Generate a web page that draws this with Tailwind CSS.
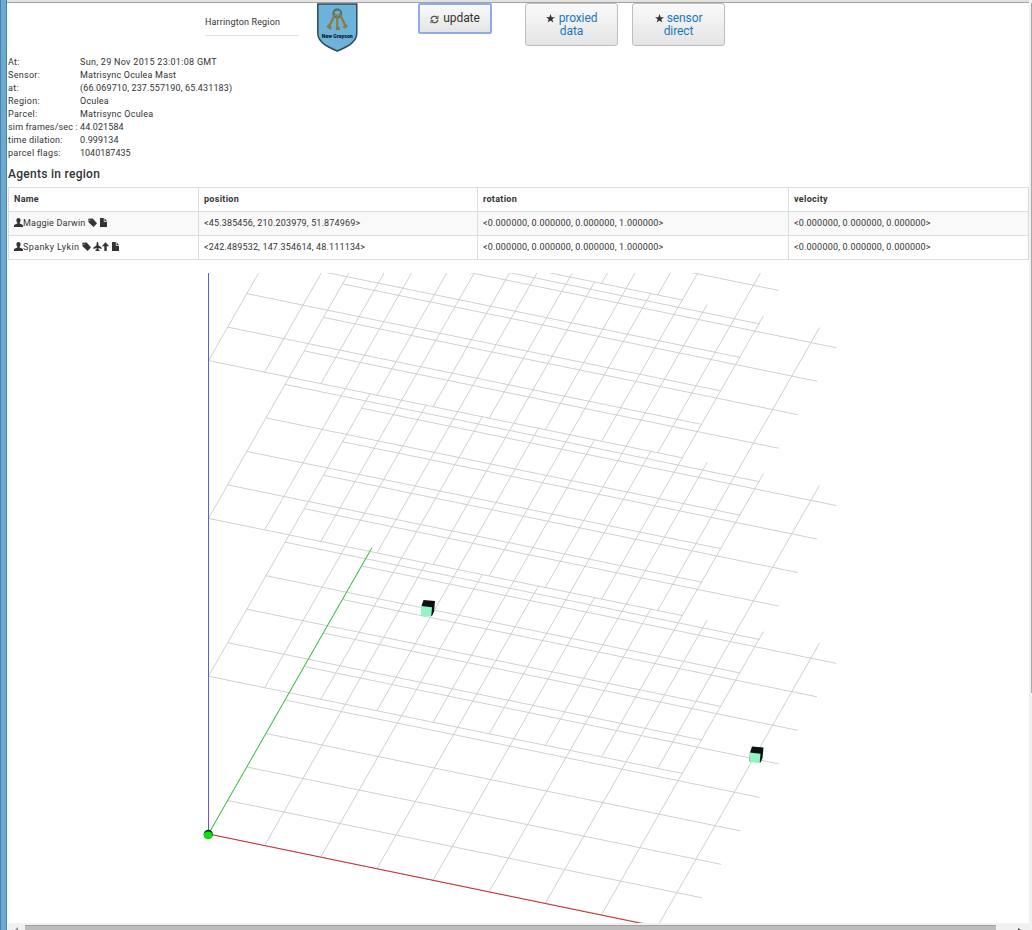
<!DOCTYPE html>
<html lang="en">
<head>
<meta charset="utf-8">
<title>Agents in region</title>
<script src="https://cdn.jsdelivr.net/npm/@tailwindcss/browser@4"></script>
</head>
<body class="h-[930px] w-[1032px] overflow-hidden bg-white font-['Roboto',sans-serif] text-[#333]">
<svg class="hidden">
  <symbol id="user" viewBox="0 0 9 9"><path d="M4.5 0C5.9 0 6.7 1 6.600 2.400 6.500 3.600 6 4.300 5.600 4.700v.8c.6.5 3.300.8 3.400 2V9H0V7.500c.1-1.200 2.800-1.500 3.400-2v-.8C3 4.300 2.500 3.600 2.400 2.400 2.300 1 3.100 0 4.500 0z"/></symbol>
  <symbol id="tag" viewBox="0 0 9 9"><path d="M.3.8 4.600.6 9 5.200 5.600 8.900.5 4.300z"/><circle cx="1.900" cy="2.200" r=".5" fill="#fff"/></symbol>
  <symbol id="file" viewBox="0 0 9 9"><path d="M1 0h3.800v3.800H8V9H1z"/><path d="M5.500.2 7.900 3H5.500z"/></symbol>
  <symbol id="plane" viewBox="0 0 9 9"><path d="M4.500 0c.6 0 .9.700.9 1.500v1.700L8.600 5.600v1.300L5.400 6v1.300l1.200 1V9H2.400v-.7l1.200-1V6L.4 6.900V5.600l3.200-2.400V1.500C3.600.7 3.900 0 4.500 0z"/></symbol>
  <symbol id="up" viewBox="0 0 9 9"><path d="M4.500.3 8.200 4.200H5.700V9H3.300V4.200H.8z"/></symbol>
</svg>
<div class="flex h-full flex-col">
  <div class="ml-1 h-[3px] shrink-0 border-b border-[#a3a3a3] bg-[#e2e2e2]"></div>
  <div class="-mt-[3px] flex min-h-0 flex-1">
    <div class="w-[7px] shrink-0 border-x border-x-[#4a80aa] bg-[#6aa9d0]"></div>
    <main class="flex w-[1022px] shrink-0 flex-col pl-px pt-[3px]">
      <header class="flex h-[53px] shrink-0 items-start pl-[197px]">
        <div class="h-[33px] w-[94px] border-b border-[#e2e2e2] pt-[11px] text-[9px] leading-4 tracking-[.15px]">Harrington Region</div>
        <svg class="ml-[18px] h-[50px] w-[42px]" viewBox="0.700 0.500 42 50">
          <path d="M1.500 1.500h39v29c0 8-7 13-19.500 18C8.500 43.500 1.500 38.500 1.500 30.500z" fill="#6db3d9" stroke="#31485a" stroke-width="1.500"/>
          <g fill="none" stroke="#8d7a42" stroke-width="2.200"><circle cx="21" cy="11" r="4" stroke="#4f6b69" stroke-width="1.800"/><path d="M19 11l-6.500 14M21 12v15M23 11l6.500 13"/><path d="M11 23l4 3M19.500 26h4M27 25l4-2" stroke-width="3"/></g>
          <text x="21" y="35.500" text-anchor="middle" textLength="31" lengthAdjust="spacingAndGlyphs" font-size="5.500" font-weight="900" fill="#0b1b29">New Grayson</text>
        </svg>
        <button class="ml-[59px] flex h-[31px] w-[74px] items-center justify-center gap-1 rounded-[2px] border-2 border-[#8faaea] bg-linear-to-b from-[#fafafa] to-[#e4e4e4] pb-0.5 text-xs tracking-[-.05px]">
          <svg class="mt-[3px] size-[9px]" viewBox="0 0 9 9" fill="none" stroke="#555" stroke-width="1.300"><path d="M1.200 4.200C1.200 1.200 5.500.5 7.200 2.500M7.800 4.800C7.800 7.800 3.500 8.500 1.800 6.500"/><path d="M8 .8v2.700H5.500M1 8.200V5.500h2.500" stroke-width="1"/></svg>update
        </button>
        <button class="ml-[33px] h-[43px] w-[93px] rounded-[3px] border border-[#bdbdbd] bg-linear-to-b from-[#fafafa] to-[#e4e4e4] text-xs leading-[13px] tracking-[-.1px] text-[#1a78bd]"><svg class="mr-1 inline size-[9px] align-[-1px]" viewBox="0 0 10 10" fill="#333"><path d="M5 0l1.300 3.500H10L7 5.800 8.100 9.500 5 7.300 1.900 9.500 3 5.800 0 3.500h3.700z"/></svg>proxied<br>data</button>
        <button class="ml-[14px] h-[43px] w-[93px] rounded-[3px] border border-[#bdbdbd] bg-linear-to-b from-[#fafafa] to-[#e4e4e4] text-xs leading-[13px] tracking-[-.1px] text-[#1a78bd]"><svg class="mr-[3px] inline size-[9px] align-[-1px]" viewBox="0 0 10 10" fill="#333"><path d="M5 0l1.300 3.500H10L7 5.800 8.100 9.500 5 7.300 1.900 9.500 3 5.800 0 3.500h3.700z"/></svg>sensor<br>direct</button>
      </header>
      <dl class="grid grid-cols-[72px_1fr] whitespace-nowrap text-[9px] leading-[13px] tracking-[.3px]">
        <dt>At:</dt><dd>Sun, 29 Nov 2015 23:01:08 GMT</dd>
        <dt>Sensor:</dt><dd class="tracking-[.2px]">Matrisync Oculea Mast</dd>
        <dt>at:</dt><dd class="tracking-[.13px]">(66.069710, 237.557190, 65.431183)</dd>
        <dt>Region:</dt><dd class="tracking-[.2px]">Oculea</dd>
        <dt>Parcel:</dt><dd class="tracking-[.25px]">Matrisync Oculea</dd>
        <dt class="tracking-[.15px]">sim frames/sec :</dt><dd class="tracking-[.1px]">44.021584</dd>
        <dt class="tracking-[.2px]">time dilation:</dt><dd class="tracking-[.1px]">0.999134</dd>
        <dt>parcel flags:</dt><dd class="tracking-normal">1040187435</dd>
      </dl>
      <h2 class="mt-[7px] h-[21px] text-xs font-medium leading-[15px] tracking-[.28px]">Agents in region</h2>
      <table class="w-[1021px] table-fixed border-collapse text-left text-[9px] leading-3 tracking-[.2px] [&_td]:border [&_td]:border-[#ddd] [&_td]:px-[5px] [&_td]:pt-0 [&_td]:pb-0.5 [&_th]:border [&_th]:border-[#ddd] [&_th]:px-[5px] [&_th]:pt-0 [&_th]:pb-0.5 [&_th]:tracking-[.3px] [&_tr]:h-6">
        <colgroup><col class="w-[190px]"><col class="w-[279px]"><col class="w-[311px]"><col></colgroup>
        <tr class="font-bold"><th>Name</th><th>position</th><th>rotation</th><th>velocity</th></tr>
        <tr class="bg-[#f9f9f9]"><td><div class="flex items-center"><svg class="size-[9px] fill-[#333]"><use href="#user"/></svg>Maggie Darwin<svg class="ml-[2px] size-[9px] fill-[#333]"><use href="#tag"/></svg><svg class="ml-[2px] size-[9px] fill-[#333]"><use href="#file"/></svg></div></td><td class="tracking-[.16px]">&lt;45.385456, 210.203979, 51.874969&gt;</td><td>&lt;0.000000, 0.000000, 0.000000, 1.000000&gt;</td><td>&lt;0.000000, 0.000000, 0.000000&gt;</td></tr>
        <tr><td><div class="flex items-center"><svg class="size-[9px] fill-[#333]"><use href="#user"/></svg><span class="tracking-[.4px]">Spanky Lykin</span><svg class="ml-[3px] size-[9px] fill-[#333]"><use href="#tag"/></svg><svg class="ml-[2px] size-[9px] fill-[#333]"><use href="#plane"/></svg><svg class="-ml-px size-[9px] fill-[#333]"><use href="#up"/></svg><svg class="ml-px size-[9px] fill-[#333]"><use href="#file"/></svg></div></td><td class="tracking-[.15px]">&lt;242.489532, 147.354614, 48.111134&gt;</td><td>&lt;0.000000, 0.000000, 0.000000, 1.000000&gt;</td><td>&lt;0.000000, 0.000000, 0.000000&gt;</td></tr>
      </table>
      <svg class="mt-[13px] h-[650px] w-[1021px] shrink-0" viewBox="8 273 1021 650">
        <path id="grid" fill="none" stroke="#cbcbcb" stroke-width=".9"/>
        <path d="M208.500 273V834" stroke="#5b5be0"/>
        <path d="M208.500 834L371.900 547.700" stroke="#2fc832"/>
        <path d="M208.500 834L688 933" stroke="#cf2a2a"/>
        <circle cx="208.300" cy="834.300" r="4.600" fill="#063b06"/><ellipse cx="208.100" cy="835.300" rx="4.300" ry="3.700" fill="#0be00b"/>
        <g id="agent"><path d="M423.500 600l11.500 1-1 10.500-2 4.500-11-1 .5-9z" fill="#0b1211"/><path d="M421 606l11 1.200-.8 9.400-10.200-.8z" fill="#93f5c4"/></g>
        <use href="#agent" x="328.500" y="146.500"/>
      </svg>
      <div class="flex h-[7px] shrink-0 items-start bg-[#f1f1f1]">
        <svg class="h-[7px] w-[17px]" viewBox="0 0 17 7"><path d="M7 7l3-3v3z" fill="#888"/></svg>
        <div class="mt-[2px] h-[5px] w-[971px] border-t border-[#a0a0a0] bg-[#bcbcbc]"></div>
        <svg class="ml-[21px] h-[7px] w-[6px]" viewBox="0 0 6 7"><path d="M1 5l3 2H1z" fill="#444"/></svg>
      </div>
    </main>
    <aside class="flex w-[3px] flex-col bg-[#f1f1f1] pt-[3px]"><div class="ml-[2px] h-[690px] bg-[#a9a9a9]"></div></aside>
  </div>
</div>
<script>
  // Parallel projection: one grid cell along x, y and one layer along z.
  const ox = 208.5, oy = 834, X = [56.15, 11.52], Y = [19.15, -33.5], Z = -157.8, len = 8.45;
  let d = '';
  for (let k = 0; k < 5; k++) for (let n = 0; n < 9; n++) {
    const y0 = oy + k * Z;
    d += `M${ox + n * X[0]} ${y0 + n * X[1]}l${len * Y[0]} ${len * Y[1]}`;
    d += `M${ox + n * Y[0]} ${y0 + n * Y[1]}l${len * X[0]} ${len * X[1]}`;
  }
  document.getElementById('grid').setAttribute('d', d);
</script>
</body>
</html>
